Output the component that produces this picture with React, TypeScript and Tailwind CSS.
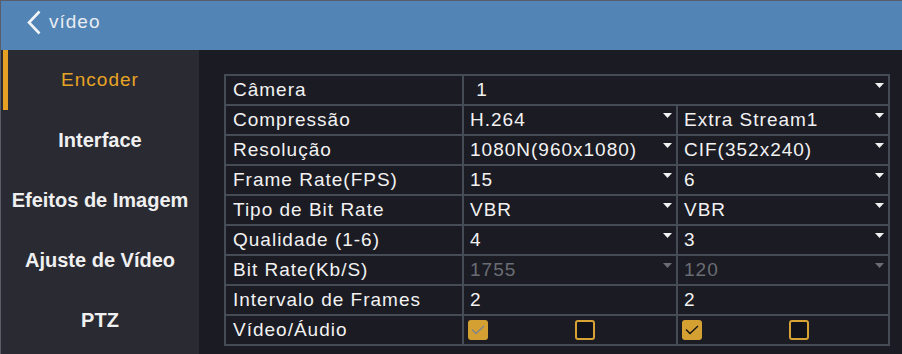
import { ReactNode } from 'react';

const MENU = ['Encoder', 'Interface', 'Efeitos de Imagem', 'Ajuste de Vídeo', 'PTZ'];

type Cell = { text: string; arrow?: boolean; disabled?: boolean };

const ROWS: { label: string; cells: Cell[] }[] = [
  { label: 'Compressão', cells: [{ text: 'H.264', arrow: true }, { text: 'Extra Stream1', arrow: true }] },
  { label: 'Resolução', cells: [{ text: '1080N(960x1080)', arrow: true }, { text: 'CIF(352x240)', arrow: true }] },
  { label: 'Frame Rate(FPS)', cells: [{ text: '15', arrow: true }, { text: '6', arrow: true }] },
  { label: 'Tipo de Bit Rate', cells: [{ text: 'VBR', arrow: true }, { text: 'VBR', arrow: true }] },
  { label: 'Qualidade (1-6)', cells: [{ text: '4', arrow: true }, { text: '3', arrow: true }] },
  { label: 'Bit Rate(Kb/S)', cells: [{ text: '1755', arrow: true, disabled: true }, { text: '120', arrow: true, disabled: true }] },
  { label: 'Intervalo de Frames', cells: [{ text: '2' }, { text: '2' }] },
];

function Arrow({ disabled }: { disabled?: boolean }) {
  return (
    <svg width="9" height="5" viewBox="0 0 9 5" className="absolute right-[4px] top-[7px]">
      <polygon points="0,0 9,0 4.5,5" fill={disabled ? '#6a6d74' : '#f2f2f2'} />
    </svg>
  );
}

function ValueCell({ cell, span }: { cell: Cell; span?: boolean }) {
  return (
    <div
      className={`relative flex items-center bg-[#1b1b23] pl-[6px] ${span ? 'col-span-2' : ''} ${
        cell.disabled ? 'text-[#6a6d74]' : 'text-[#f2f2f2]'
      }`}
    >
      <span className="whitespace-pre">{cell.text}</span>
      {cell.arrow && <Arrow disabled={cell.disabled} />}
    </div>
  );
}

function LabelCell({ children }: { children: ReactNode }) {
  return <div className="flex items-center bg-[#1b1b23] pl-[7px] text-[#f2f2f2]">{children}</div>;
}

function Check({ checked, mark }: { checked: boolean; mark?: string }) {
  if (!checked) {
    return <div className="w-[20px] h-[20px] rounded-[3px] border-2 border-[#d6a233] bg-[#12121a]" />;
  }
  return (
    <div className="w-[20px] h-[20px] rounded-[3px] bg-[#d4a032] flex items-center justify-center">
      <svg width="14" height="10" viewBox="0 0 14 10">
        <polyline points="1,4.5 5,8.5 13,1" fill="none" stroke={mark} strokeWidth="1.4" />
      </svg>
    </div>
  );
}

export default function App() {
  return (
    <div
      className="w-[902px] h-[354px] flex flex-col bg-[#1b1b23] border-t border-l border-[#5b5e68] overflow-hidden"
      style={{ fontFamily: '"Liberation Sans", Arial, sans-serif' }}
    >
      <header className="h-[49px] shrink-0 bg-[#5284b5] flex items-start pl-[26px] pt-[9px] gap-[8px]">
        <svg width="14" height="26" viewBox="0 0 14 26" className="mt-[0px]">
          <polyline points="12.5,1.5 2,12.5 12.5,23.5" fill="none" stroke="#f2f4f7" strokeWidth="2.6" />
        </svg>
        <span className="text-[19px] leading-[19px] tracking-[1px] text-[#e9edf2] mt-[2px]">vídeo</span>
      </header>

      <div className="flex flex-1 min-h-0">
        <nav className="w-[198px] shrink-0 bg-[#2a2a33] flex flex-col">
          {MENU.map((m, i) => (
            <div key={m} className="relative h-[60px] flex items-center justify-center">
              {i === 0 && <div className="absolute left-[2px] top-0 w-[5px] h-[60px] bg-[#e6a024]" />}
              {i === 0 ? (
                <span className="text-[19px] tracking-[1px] text-[#e8a424]">{m}</span>
              ) : (
                <span className="text-[20px] font-bold text-[#f0f0f0]">{m}</span>
              )}
            </div>
          ))}
        </nav>

        <main className="flex-1 pl-[25px] pt-[24px]">
          <div className="w-[666px] grid grid-cols-[236px_212px_210px] auto-rows-[28px] gap-[2px] p-[2px] bg-[#464c55] text-[19px] tracking-[1px]">
            <LabelCell>Câmera</LabelCell>
            <ValueCell cell={{ text: ' 1', arrow: true }} span />
            {ROWS.map((r) => (
              <div key={r.label} className="contents">
                <LabelCell>{r.label}</LabelCell>
                <ValueCell cell={r.cells[0]} />
                <ValueCell cell={r.cells[1]} />
              </div>
            ))}
            <LabelCell>Vídeo/Áudio</LabelCell>
            <div className="bg-[#1b1b23] flex items-center pl-[4px] gap-[87px]">
              <Check checked mark="#80848c" />
              <Check checked={false} />
            </div>
            <div className="bg-[#1b1b23] flex items-center pl-[4px] gap-[87px]">
              <Check checked mark="#141418" />
              <Check checked={false} />
            </div>
          </div>
        </main>
      </div>
    </div>
  );
}
